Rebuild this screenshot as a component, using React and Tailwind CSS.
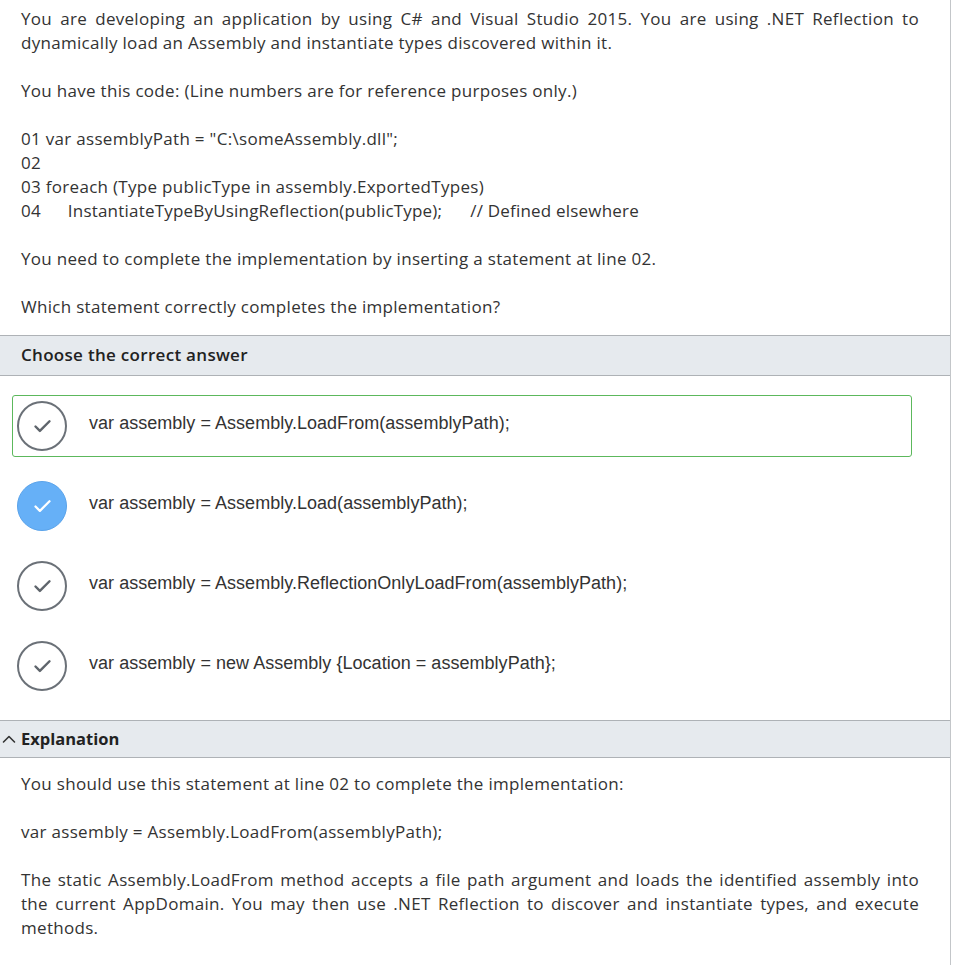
import { Check } from 'lucide-react';

const options = [
  { text: 'var assembly = Assembly.LoadFrom(assemblyPath);', correct: true },
  { text: 'var assembly = Assembly.Load(assemblyPath);', selected: true },
  { text: 'var assembly = Assembly.ReflectionOnlyLoadFrom(assemblyPath);' },
  { text: 'var assembly = new Assembly {Location = assemblyPath};' },
];

const Option = ({ text, correct, selected }) => {
  return (
    <div
      className={`flex items-center h-[62px] mt-[18px] first:mt-0 ml-[12px] mr-[38px] rounded-[3px] border ${
        correct ? 'border-[#5cb85c]' : 'border-transparent'
      }`}
    >
      <div className="pl-[4px]">
        {selected ? (
          <div className="w-[50px] h-[50px] rounded-full bg-[#66b0f7] border border-[#5aa3ea] flex items-center justify-center">
            <Check className="w-[21px] h-[21px] text-white" strokeWidth={2.6} />
          </div>
        ) : (
          <div className="w-[50px] h-[50px] rounded-full border-2 border-[#6b7178] flex items-center justify-center">
            <Check className="w-[21px] h-[21px] text-[#5f656c]" strokeWidth={2.8} />
          </div>
        )}
      </div>
      <span className="ml-[22px] -mt-[6px] text-[18px] text-[#333] font-['Liberation_Sans',Arial,sans-serif] tracking-[0.03px]">
        {text}
      </span>
    </div>
  );
};

const App = () => {
  return (
    <div className="w-[953px] min-h-[965px] bg-white">
      <div className="w-[951px] min-h-[965px] border-r border-[#c3c6c9] font-['Open_Sans',sans-serif] text-[17px] tracking-[0.3px] leading-[24px] text-[#333]">
        {/* Question */}
        <div className="pt-[7px] pl-[21px] pr-[31px]">
          <p className="text-justify">
            You are developing an application by using C# and Visual Studio 2015. You are using .NET Reflection to
            dynamically load an Assembly and instantiate types discovered within it.
          </p>
          <p className="mt-[24px]">You have this code: (Line numbers are for reference purposes only.)</p>
          <div className="mt-[24px]">
            <div>01 var assemblyPath = "C:\someAssembly.dll";</div>
            <div>02</div>
            <div>03 foreach (Type publicType in assembly.ExportedTypes)</div>
            <div className="tracking-[0.2px]">
              04<span className="inline-block w-[27px]"></span>InstantiateTypeByUsingReflection(publicType);
              <span className="inline-block w-[28px]"></span>// Defined elsewhere
            </div>
          </div>
          <p className="mt-[24px]">You need to complete the implementation by inserting a statement at line 02.</p>
          <p className="mt-[24px]">Which statement correctly completes the implementation?</p>
        </div>

        {/* Choose header */}
        <div className="mt-[16px] h-[41px] bg-[#e6eaee] border-y border-[#aeb2b6] flex items-center pl-[21px]">
          <span className="font-semibold text-[17px] -mt-[2px] text-[#222]">Choose the correct answer</span>
        </div>

        {/* Options */}
        <div className="pt-[19px]">
          {options.map((o, i) => (
            <Option key={i} {...o} />
          ))}
        </div>

        {/* Explanation header */}
        <div className="mt-[23px] h-[38px] bg-[#e6eaee] border-y border-[#aeb2b6] flex items-center">
          <svg className="w-[16px] h-[16px] ml-[1px] text-[#333]" viewBox="0 0 16 16" fill="none" stroke="currentColor" strokeWidth="1.6" strokeLinecap="round" strokeLinejoin="round">
            <path d="M2.5 11 L8 5.5 L13.5 11" />
          </svg>
          <span className="ml-[4px] font-bold text-[16.5px] tracking-normal text-[#222]">Explanation</span>
        </div>

        <div className="pt-[14px] pl-[21px] pr-[31px] pb-[24px]">
          <p>You should use this statement at line 02 to complete the implementation:</p>
          <p className="mt-[24px]">var assembly = Assembly.LoadFrom(assemblyPath);</p>
          <p className="mt-[24px] text-justify">
            The static Assembly.LoadFrom method accepts a file path argument and loads the identified assembly into
            the current AppDomain. You may then use .NET Reflection to discover and instantiate types, and execute
            methods.
          </p>
        </div>
      </div>
    </div>
  );
};

export default App;
